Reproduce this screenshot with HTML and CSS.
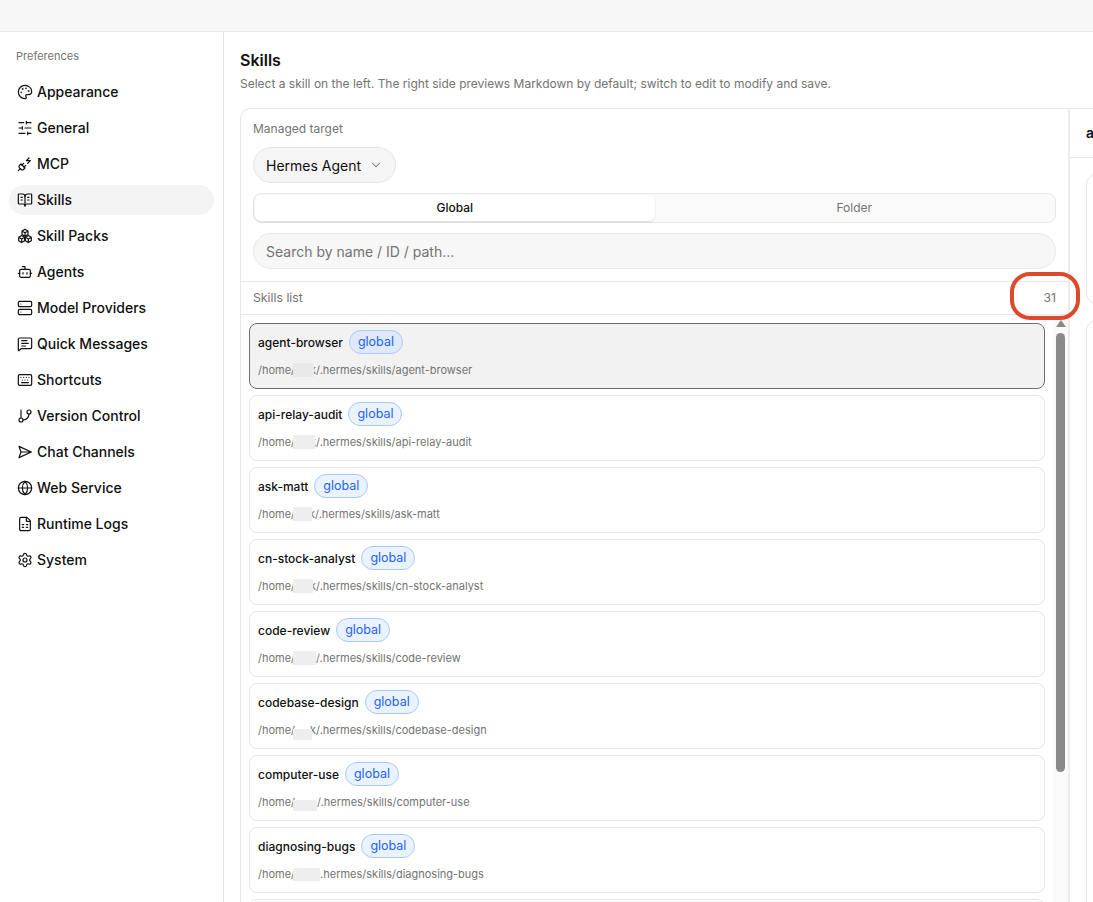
FILE: index.html
```html
<!DOCTYPE html>
<html lang="en">

<head>
	<meta charset="UTF-8">
	<meta name="viewport" content="width=device-width, initial-scale=1.0">
	<title>Preferences - Skills</title>
	<link rel="stylesheet" href="styles.css">
</head>

<body>
	<div class="topbar"></div>
	<div class="layout">
		<aside class="sidebar">
			<div class="sidebar-title">Preferences</div>
			<nav class="nav">
				<a class="nav-item"><svg class="icon" viewBox="0 0 24 24"><path d="M12 22a1 1 0 0 1 0-20 10 9 0 0 1 10 9 5 5 0 0 1-5 5h-2.25a1.75 1.75 0 0 0-1.4 2.8l.3.4a1.75 1.75 0 0 1-1.4 2.8z"/><circle cx="13.5" cy="6.5" r=".5"/><circle cx="17.5" cy="10.5" r=".5"/><circle cx="6.5" cy="12.5" r=".5"/><circle cx="8.5" cy="7.5" r=".5"/></svg>Appearance</a>
				<a class="nav-item"><svg class="icon" viewBox="0 0 24 24"><path d="M21 4h-7M10 4H3M21 12h-9M8 12H3M21 20h-5M12 20H3M14 2v4M8 10v4M16 18v4"/></svg>General</a>
				<a class="nav-item"><svg class="icon" viewBox="0 0 24 24"><path d="M6.3 20.3a2.4 2.4 0 0 0 3.4 0L12 18l-6-6-2.3 2.3a2.4 2.4 0 0 0 0 3.4Z"/><path d="m2 22 3-3M7.5 13.5 10 11M10.5 16.5 13 14M18 3l-4 4h6l-4 4"/></svg>MCP</a>
				<a class="nav-item active"><svg class="icon" viewBox="0 0 24 24"><path d="M12 7v14M16 12h2M16 8h2M6 12h2M6 8h2"/><path d="M3 18a1 1 0 0 1-1-1V4a1 1 0 0 1 1-1h5a4 4 0 0 1 4 4 4 4 0 0 1 4-4h5a1 1 0 0 1 1 1v13a1 1 0 0 1-1 1h-6a3 3 0 0 0-3 3 3 3 0 0 0-3-3z"/></svg>Skills</a>
				<a class="nav-item"><svg class="icon" viewBox="0 0 24 24"><path d="M12 2l4.5 2.6v5.2L12 12.4 7.5 9.8V4.6zM7.5 4.6 12 7.2l4.5-2.6M12 7.2v5.2"/><path d="M7 11.4l4.5 2.6v5.2L7 21.8l-4.5-2.6V14zM2.5 14 7 16.6l4.5-2.6M7 16.6v5.2"/><path d="M17 11.4l4.5 2.6v5.2L17 21.8l-4.5-2.6V14zM12.5 14l4.5 2.6 4.5-2.6M17 16.6v5.2"/></svg>Skill Packs</a>
				<a class="nav-item"><svg class="icon" viewBox="0 0 24 24"><path d="M12 8V4H8M2 14h2M20 14h2M15 13v2M9 13v2"/><rect x="4" y="8" width="16" height="12" rx="2"/></svg>Agents</a>
				<a class="nav-item"><svg class="icon" viewBox="0 0 24 24"><rect x="2" y="2" width="20" height="8" rx="2"/><rect x="2" y="14" width="20" height="8" rx="2"/><path d="M6 6h.01M6 18h.01"/></svg>Model Providers</a>
				<a class="nav-item"><svg class="icon" viewBox="0 0 24 24"><path d="M22 17a2 2 0 0 1-2 2H6.828a2 2 0 0 0-1.414.586l-2.202 2.202A.71.71 0 0 1 2 21.286V5a2 2 0 0 1 2-2h16a2 2 0 0 1 2 2z"/><path d="M7 11h10M7 15h6M7 7h8"/></svg>Quick Messages</a>
				<a class="nav-item"><svg class="icon" viewBox="0 0 24 24"><path d="M10 8h.01M12 12h.01M14 8h.01M16 12h.01M18 8h.01M6 8h.01M7 16h10M8 12h.01"/><rect x="2" y="4" width="20" height="16" rx="2"/></svg>Shortcuts</a>
				<a class="nav-item"><svg class="icon" viewBox="0 0 24 24"><path d="M6 3v12M18 9a9 9 0 0 1-9 9"/><circle cx="18" cy="6" r="3"/><circle cx="6" cy="18" r="3"/></svg>Version Control</a>
				<a class="nav-item"><svg class="icon" viewBox="0 0 24 24"><path d="M3 3.5 21.5 12 3 20.5 6 12zM6 12h15.5"/></svg>Chat Channels</a>
				<a class="nav-item"><svg class="icon" viewBox="0 0 24 24"><circle cx="12" cy="12" r="10"/><path d="M12 2a14.5 14.5 0 0 0 0 20 14.5 14.5 0 0 0 0-20M2 12h20"/></svg>Web Service</a>
				<a class="nav-item"><svg class="icon" viewBox="0 0 24 24"><path d="M6 22a2 2 0 0 1-2-2V4a2 2 0 0 1 2-2h8a2.4 2.4 0 0 1 1.704.706l3.588 3.588A2.4 2.4 0 0 1 20 8v12a2 2 0 0 1-2 2z"/><path d="M14 2v5a1 1 0 0 0 1 1h5M8 13h2M14 13h2M8 17h2M14 17h2"/></svg>Runtime Logs</a>
				<a class="nav-item"><svg class="icon" viewBox="0 0 24 24"><path d="M9.671 4.136a2.34 2.34 0 0 1 4.659 0 2.34 2.34 0 0 0 3.319 1.915 2.34 2.34 0 0 1 2.33 4.033 2.34 2.34 0 0 0 0 3.831 2.34 2.34 0 0 1-2.33 4.033 2.34 2.34 0 0 0-3.319 1.915 2.34 2.34 0 0 1-4.659 0 2.34 2.34 0 0 0-3.32-1.915 2.34 2.34 0 0 1-2.33-4.033 2.34 2.34 0 0 0 0-3.831A2.34 2.34 0 0 1 6.35 6.051a2.34 2.34 0 0 0 3.319-1.915"/><circle cx="12" cy="12" r="3"/></svg>System</a>
			</nav>
		</aside>

		<main class="main">
			<h1>Skills</h1>
			<p class="desc">Select a skill on the left. The right side previews Markdown by default; switch to edit to modify and save.</p>

			<div class="panel">
				<section class="left">
					<div class="controls">
						<div class="label">Managed target</div>
						<button class="select">Hermes Agent
							<svg class="chevron" viewBox="0 0 24 24"><path d="m6 9 6 6 6-6"/></svg>
						</button>
						<div class="segment">
							<div class="tab on">Global</div>
							<div class="tab">Folder</div>
						</div>
						<div class="search">Search by name / ID / path...</div>
					</div>

					<div class="list-head">
						<span>Skills list</span>
						<span>31</span>
					</div>

					<div class="list-wrap">
						<ul class="list">
							<li class="card selected">
								<div class="card-top"><span class="name">agent-browser</span><span class="badge">global</span></div>
								<div class="path">/home/<span class="redact r1"></span>k/.hermes/skills/agent-browser</div>
							</li>
							<li class="card">
								<div class="card-top"><span class="name">api-relay-audit</span><span class="badge">global</span></div>
								<div class="path">/home/<span class="redact r2"></span>k/.hermes/skills/api-relay-audit</div>
							</li>
							<li class="card">
								<div class="card-top"><span class="name">ask-matt</span><span class="badge">global</span></div>
								<div class="path">/home/<span class="redact r3"></span>k/.hermes/skills/ask-matt</div>
							</li>
							<li class="card">
								<div class="card-top"><span class="name">cn-stock-analyst</span><span class="badge">global</span></div>
								<div class="path">/home/<span class="redact r4"></span>k/.hermes/skills/cn-stock-analyst</div>
							</li>
							<li class="card">
								<div class="card-top"><span class="name">code-review</span><span class="badge">global</span></div>
								<div class="path">/home/<span class="redact r5"></span>/.hermes/skills/code-review</div>
							</li>
							<li class="card">
								<div class="card-top"><span class="name">codebase-design</span><span class="badge">global</span></div>
								<div class="path">/home/<span class="redact r6"></span>k/.hermes/skills/codebase-design</div>
							</li>
							<li class="card">
								<div class="card-top"><span class="name">computer-use</span><span class="badge">global</span></div>
								<div class="path">/home/<span class="redact r7"></span>/.hermes/skills/computer-use</div>
							</li>
							<li class="card">
								<div class="card-top"><span class="name">diagnosing-bugs</span><span class="badge">global</span></div>
								<div class="path">/home/<span class="redact r8"></span>.hermes/skills/diagnosing-bugs</div>
							</li>
							<li class="card"></li>
						</ul>
						<div class="scrollbar">
							<div class="arrow"></div>
							<div class="thumb"></div>
						</div>
					</div>
				</section>

				<section class="right">
					<div class="right-head">a</div>
					<div class="right-body">
						<div class="box box-first"></div>
						<div class="box"></div>
					</div>
				</section>
			</div>
		</main>
	</div>
	<div class="callout"></div>
</body>

</html>
```

FILE: styles.css
```css
* {
	box-sizing: border-box;
}

html,
body {
	height: 100%;
}

body {
	margin: 0;
	display: flex;
	flex-direction: column;
	overflow: hidden;
	font-family: Inter, "Liberation Sans", sans-serif;
	color: #0f0f0f;
	background: #fff;
}

.topbar {
	flex: none;
	height: 32px;
	background: #f7f7f7;
	border-bottom: 1px solid #e8e8e8;
}

.layout {
	flex: 1;
	display: flex;
	min-height: 0;
}

/* sidebar */
.sidebar {
	flex: none;
	width: 224px;
	padding: 16px 9px 0;
	border-right: 1px solid #e5e5e5;
}

.sidebar-title {
	padding-left: 7px;
	font-size: 11px;
	line-height: 16px;
	color: #737373;
}

.nav {
	display: flex;
	flex-direction: column;
	gap: 6px;
	width: 205px;
	margin-top: 13px;
}

.nav-item {
	display: flex;
	align-items: center;
	gap: 4px;
	height: 30px;
	padding: 0 0 1px 8px;
	border-radius: 15px;
	font-size: 14px;
	font-weight: 500;
}

.nav-item.active {
	background: #f4f4f4;
}

.icon {
	flex: none;
	width: 16px;
	height: 16px;
	fill: none;
	stroke: #111;
	stroke-width: 1.8;
	stroke-linecap: round;
	stroke-linejoin: round;
}

/* main */
.main {
	flex: 1;
	min-width: 0;
	display: flex;
	flex-direction: column;
	padding: 18px 0 0 16px;
	overflow: hidden;
}

h1 {
	margin: 0;
	font-size: 16px;
	line-height: 20px;
	font-weight: 600;
}

.desc {
	margin: 5px 0 0;
	font-size: 12px;
	line-height: 18px;
	color: #737373;
}

.panel {
	flex: 1;
	min-height: 0;
	display: flex;
	width: 1000px;
	margin-top: 15px;
	border: 1px solid #e8e8e8;
	border-bottom: 0;
	border-radius: 10px 10px 0 0;
}

.left {
	flex: none;
	width: 829px;
	display: flex;
	flex-direction: column;
	border-right: 2px solid #ececec;
}

.controls {
	padding: 12px 12px 12px;
	border-bottom: 1px solid #e8e8e8;
}

.label {
	font-size: 12px;
	line-height: 16px;
	color: #737373;
}

.select {
	display: flex;
	align-items: center;
	gap: 8px;
	height: 36px;
	margin-top: 10px;
	padding: 0 12px;
	border: 1px solid #e5e5e5;
	border-radius: 18px;
	background: #f5f5f5;
	font: 14px Inter, "Liberation Sans", sans-serif;
	color: #0f0f0f;
}

.chevron {
	width: 14px;
	height: 14px;
	fill: none;
	stroke: #737373;
	stroke-width: 1.8;
	stroke-linecap: round;
	stroke-linejoin: round;
}

.segment {
	display: flex;
	height: 30px;
	margin-top: 10px;
	padding: 1px;
	border: 1px solid #e8e8e8;
	border-radius: 8px;
	background: #fafafa;
}

.tab {
	flex: 1;
	display: flex;
	align-items: center;
	justify-content: center;
	padding-bottom: 1px;
	font-size: 12px;
	color: #737373;
}

.tab.on {
	background: #fff;
	border-radius: 6px;
	box-shadow: 0 1px 2px #0000001f;
	font-weight: 500;
	color: #0f0f0f;
}

.search {
	display: flex;
	align-items: center;
	height: 36px;
	margin-top: 10px;
	padding: 0 12px;
	border: 1px solid #e8e8e8;
	border-radius: 18px;
	background: #f7f7f7;
	font-size: 14px;
	color: #737373;
}

.list-head {
	flex: none;
	display: flex;
	align-items: center;
	justify-content: space-between;
	height: 33px;
	padding: 0 12px 1px;
	border-bottom: 1px solid #e8e8e8;
	font-size: 12.25px;
	color: #737373;
}

.list-wrap {
	flex: 1;
	min-height: 0;
	display: flex;
	overflow: hidden;
}

.list {
	flex: 1;
	min-width: 0;
	margin: 0;
	padding: 8px 8px 0;
	list-style: none;
	display: flex;
	flex-direction: column;
	gap: 6px;
}

.card {
	flex: none;
	height: 66px;
	padding: 6px 8px 0;
	border: 1px solid #e8e8e8;
	border-radius: 8px;
}

.card.selected {
	background: #f2f2f2;
	border-color: #6e6e6e;
}

.card-top {
	display: flex;
	align-items: center;
	gap: 6px;
}

.name {
	font-size: 12px;
	font-weight: 500;
}

.badge {
	height: 24px;
	padding: 0 8px;
	border: 1px solid #a9c9fd;
	border-radius: 12px;
	background: #e9f2ff;
	font-size: 12.5px;
	line-height: 22px;
	color: #1f62f5;
}

.selected .badge {
	background: #dfe9f7;
}

.path {
	margin-top: 9px;
	font-size: 11px;
	line-height: 14px;
	color: #737373;
	white-space: nowrap;
}

/* blanked-out user name */
.redact {
	position: relative;
	display: inline-block;
	height: 14px;
	margin-left: -2px;
	vertical-align: top;
	background: #eee;
}

.selected .redact {
	background: #e9e9e9;
}

.r1 {
	width: 21px;
	margin-right: -4px;
}

.r2 {
	width: 22px;
	margin-right: -5px;
}

.r3 {
	width: 19px;
	margin-right: -3px;
}

.r4 {
	width: 20px;
	margin-right: -3px;
}

.r5 {
	width: 23px;
}

.r6 {
	top: 6px;
	width: 19px;
	height: 11px;
	margin-right: -2px;
}

.r7 {
	top: 5px;
	width: 24px;
	height: 11px;
}

.r8 {
	top: 1px;
	width: 27px;
	height: 13px;
}

.scrollbar {
	flex: none;
	width: 15px;
	padding-top: 5px;
	display: flex;
	flex-direction: column;
	align-items: center;
	background: #fafafa;
}

.arrow {
	width: 0;
	height: 0;
	border-left: 5px solid transparent;
	border-right: 5px solid transparent;
	border-bottom: 7px solid #8a8a8a;
}

.thumb {
	width: 9px;
	height: 439px;
	margin-top: 6px;
	border-radius: 5px;
	background: #8a8a8a;
}

/* right side, mostly cut off by the window */
.right {
	flex: 1;
	min-width: 0;
}

.right-head {
	height: 49px;
	padding: 0 16px;
	border-bottom: 1px solid #e8e8e8;
	font-size: 14px;
	font-weight: 600;
	line-height: 48px;
}

.right-body {
	display: flex;
	flex-direction: column;
	gap: 16px;
	padding: 16px;
}

.box {
	height: 700px;
	border: 1px solid #e8e8e8;
	border-radius: 10px;
}

.box-first {
	height: 130px;
}

/* red hand-drawn mark over the count */
.callout {
	position: absolute;
	left: 1010px;
	top: 272px;
	width: 70px;
	height: 48px;
	border: 4px solid #dc4a2d;
	border-radius: 20px;
}
```
